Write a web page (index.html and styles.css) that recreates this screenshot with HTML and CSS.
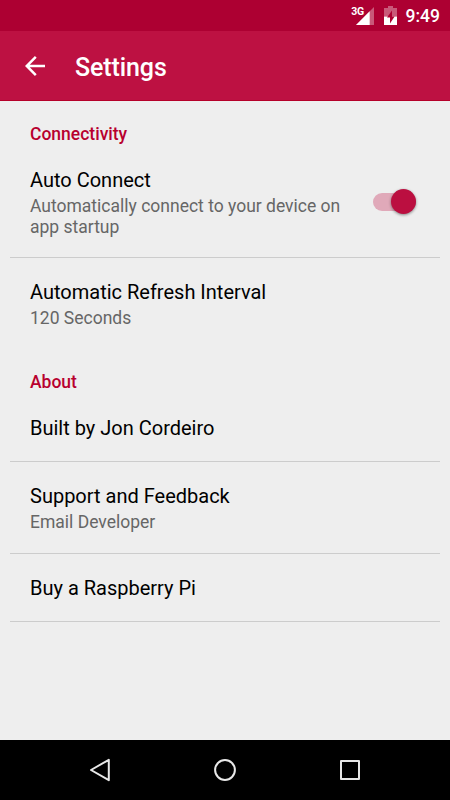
FILE: index.html
```html
<!DOCTYPE html>
<html lang="en">
<head>
    <meta charset="UTF-8">
    <meta name="viewport" content="width=device-width, initial-scale=1.0">
    <title>Settings</title>
    <link rel="stylesheet" href="styles.css">
</head>
<body>

    <!-- Status Bar -->
    <div class="status-bar">
        <span class="network">3G</span>
        <svg class="signal" width="18" height="18" viewBox="0 0 18 18">
            <path d="M18 0V18H0z" fill="#fff" fill-opacity="0.35"/>
            <path d="M13.7 4.3V18H0z" fill="#fff"/>
        </svg>
        <svg class="battery" width="13" height="19" viewBox="0 0 13 19">
            <path d="M4 0h5v2h4v8.5H0V2h4z" fill="#fff" fill-opacity="0.35"/>
            <path d="M0 10.5h13V19H0z" fill="#fff"/>
            <path d="M8 4.6L3 11.6h3V17.4l4.6-7H8z" fill="#ad0032"/>
        </svg>
        <span class="clock">9:49</span>
    </div>

    <!-- App Bar -->
    <header class="app-bar">
        <svg class="back" width="20" height="20" viewBox="0 0 20 20" fill="none" stroke="#fff" stroke-width="2.5">
            <path d="M20 10H2M10.8 0.9L1.7 10l9.1 9.1"/>
        </svg>
        <h1>Settings</h1>
    </header>

    <!-- Preferences -->
    <main class="settings">
        <section>
            <h2>Connectivity</h2>
            <div class="item first">
                <div class="text">
                    <div class="title">Auto Connect</div>
                    <div class="summary">Automatically connect to your device on app startup</div>
                </div>
                <div class="switch"><div class="thumb"></div></div>
            </div>
            <div class="item last">
                <div class="text">
                    <div class="title">Automatic Refresh Interval</div>
                    <div class="summary">120 Seconds</div>
                </div>
            </div>
        </section>

        <section>
            <h2>About</h2>
            <div class="item first single">
                <div class="title">Built by Jon Cordeiro</div>
            </div>
            <div class="item">
                <div class="text">
                    <div class="title">Support and Feedback</div>
                    <div class="summary">Email Developer</div>
                </div>
            </div>
            <div class="item single">
                <div class="title">Buy a Raspberry Pi</div>
            </div>
        </section>
    </main>

    <!-- Navigation Bar -->
    <nav class="nav-bar">
        <svg width="24" height="26" viewBox="0 0 24 26">
            <path d="M20.8 2.8v20.4L3 13z"/>
        </svg>
        <svg width="24" height="26" viewBox="0 0 24 26">
            <circle cx="12" cy="13" r="9.9"/>
        </svg>
        <svg width="24" height="26" viewBox="0 0 24 26">
            <rect x="3" y="4" width="18" height="18"/>
        </svg>
    </nav>

</body>
</html>
```

FILE: styles.css
```css
/* General Reset */
* {
    margin: 0;
    padding: 0;
    box-sizing: border-box;
}

body {
    font-family: Roboto, sans-serif;
    background-color: #eee;
    color: #000;
    height: 100vh;
    display: flex;
    flex-direction: column;
    overflow: hidden;
}

/* Status Bar */
.status-bar {
    height: 31px;
    padding: 0 10px 0 0;
    background-color: #ad0032;
    color: white;
    display: flex;
    justify-content: flex-end;
    align-items: center;
}

.network {
    font-size: 10.5px;
    font-weight: bold;
    letter-spacing: -0.5px;
    line-height: 10px;
    margin: 0 -8px 8px 0;
}

.signal {
    margin-right: 10px;
}

.clock {
    font-size: 17.5px;
    font-weight: 500;
    margin-left: 9px;
}

/* App Bar */
.app-bar {
    height: 70px;
    padding-left: 25px;
    background-color: #bd1142;
    border-bottom: 1px solid #b5002a;
    color: white;
    display: flex;
    align-items: center;
}

.app-bar h1 {
    font-size: 25px;
    font-weight: 500;
    letter-spacing: -0.1px;
    margin: 3px 0 0 30px;
}

/* Settings List */
.settings {
    flex: 1;
    padding: 0 10px;
}

h2 {
    height: 48px;
    padding: 22px 20px 0;
    color: #b8002e;
    font-size: 17.5px;
    font-weight: 500;
    line-height: 22px;
}

.item {
    padding: 23px 20px 20px;
    border-bottom: 1px solid #ccc;
    display: flex;
    justify-content: space-between;
    align-items: center;
}

.item.first {
    padding-top: 20px;
    padding-bottom: 19px;
}

.item.single {
    padding-bottom: 21px;
}

.item.last {
    border-bottom: none;
}

.title {
    font-size: 20px;
    line-height: 23px;
}

.summary {
    color: #666;
    font-size: 17.5px;
    line-height: 21px;
    margin-top: 4px;
}

/* Switch */
.switch {
    flex: none;
    width: 43px;
    height: 18px;
    margin: 0 4px 4px 20px;
    border-radius: 9px;
    background-color: #e0a9b9;
    display: flex;
    justify-content: flex-end;
    align-items: center;
}

.thumb {
    flex: none;
    width: 25px;
    height: 25px;
    border-radius: 50%;
    background-color: #bb0f40;
    box-shadow: 0 1px 3px rgba(0, 0, 0, 0.45);
}

/* Navigation Bar */
.nav-bar {
    height: 60px;
    background-color: black;
    display: flex;
    justify-content: center;
    align-items: center;
    gap: 101px;
}

.nav-bar svg {
    fill: none;
    stroke: #e8e8e8;
    stroke-width: 2;
    stroke-linejoin: round;
}
```
